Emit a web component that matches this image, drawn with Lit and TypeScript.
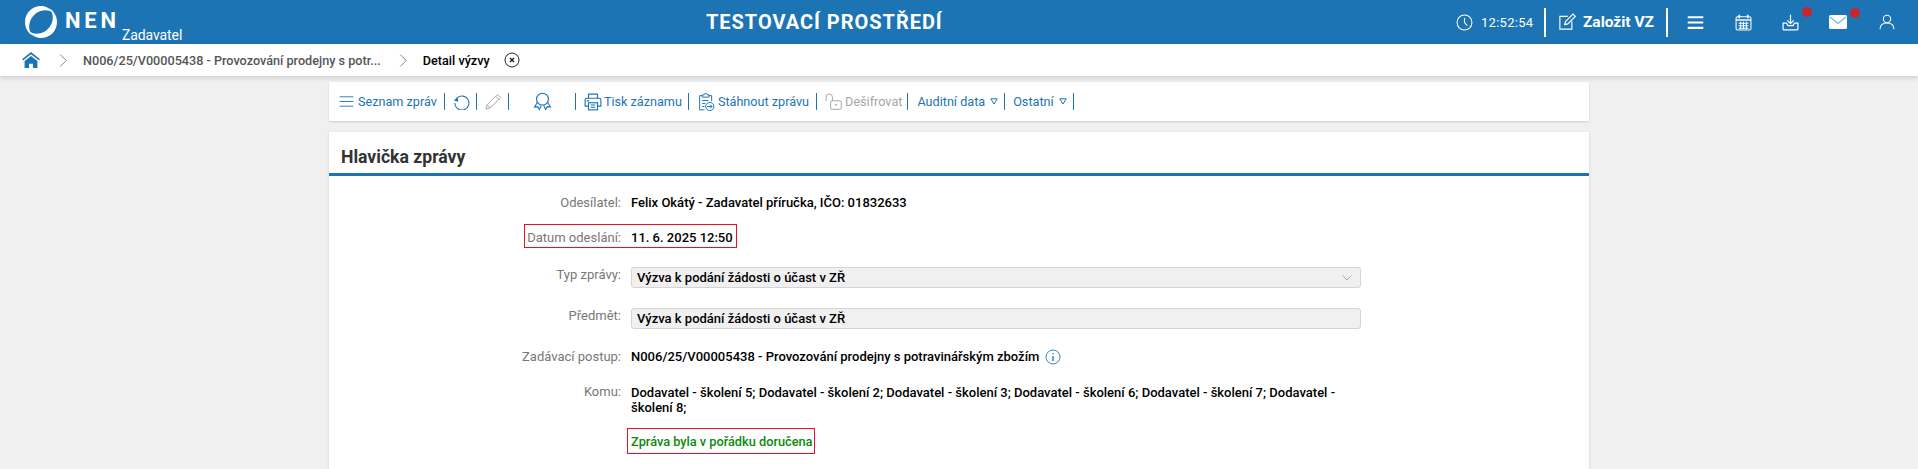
import { LitElement, html, css, svg } from 'lit';
import { customElement } from 'lit/decorators.js';

// Icons are all drawn on a 24 unit box, stroked with currentColor
const icon = (body: unknown, size = 18, sw = 1.5) => html`<svg class="ico" width=${size} height=${size} viewBox="0 0 24 24" fill="none" stroke="currentColor" stroke-width=${sw}>${body}</svg>`;

const icons = {
  clock: svg`<circle cx="12" cy="12" r="10.5"/><path d="M12 5.5V12l4 4.5"/>`,
  edit: svg`<path d="M13 4.5H2.5v17h16V11"/><path d="M9 15.5l1-4L20 1.5l3 3L13 14.5z"/>`,
  menu: svg`<path d="M1 4.5h22M1 12h22M1 19.5h22"/>`,
  calendar: svg`<rect x="1.5" y="4" width="21" height="18.5" rx="2"/><path d="M6 1v5M18 1v5" stroke-width="2.4"/><path d="M1.5 8.5h21" stroke-width="2"/><path d="M5 13h14M5 16.5h14M5 20h14M8 11v10.5M12 11v10.5M16 11v10.5" stroke-width="1.5"/>`,
  download: svg`<path d="M12 1v12M7.5 9l4.5 4.5L16.5 9"/><path d="M6.5 13H1.5v8a1.5 1.5 0 0 0 1.5 1.5h18a1.5 1.5 0 0 0 1.5-1.5v-8h-5l-2 3.5h-7z"/>`,
  user: svg`<circle cx="12" cy="7.5" r="5.5"/><path d="M1.5 23c0-6 4-9.5 10.5-9.5S22.5 17 22.5 23"/>`,
  undo: svg`<path d="M5 7.5A10 10 0 1 1 2.5 14"/><path d="M1 10.5L6.5 6l1 6.5z" fill="currentColor" stroke="none"/>`,
  pencil: svg`<path d="M3 16.5L17.5 2l4.5 4.5L7.5 21 1.5 22.5z"/><path d="M3 16.5L7.5 21M15 4.5l4.5 4.5"/>`,
  ribbon: svg`<circle cx="12" cy="9" r="7.5"/><path d="M5.5 13L2 19l4-.5 2 3.5 2.5-5M18.5 13l3.5 6-4-.5-2 3.5-2.5-5"/>`,
  printer: svg`<path d="M6 7V1.5h12V7"/><path d="M6 17.5H1.5V9a2 2 0 0 1 2-2h17a2 2 0 0 1 2 2v8.5H18"/><rect x="6" y="13" width="12" height="9.5"/><path d="M9 16h6M9 19h6M3.5 10.5h3"/>`,
  clip: svg`<path d="M7 3.5H3.5v19H10"/><path d="M7 5.5V2.5h2.5a2 2 0 0 1 4 0H16v3zM16 3.5h3.5V11"/><path d="M7 10h8M7 14h4M7 18h3"/><circle cx="17" cy="18" r="5.5"/><path d="M13.5 18h6.5M17.5 15.5L20 18l-2.5 2.5"/>`,
  lock: svg`<rect x="8" y="11" width="15" height="12" rx="1.5"/><path d="M1.5 11V6a4.5 4.5 0 0 1 9 0v5"/><circle cx="15.5" cy="16.5" r=".8" fill="currentColor"/>`,
};

const chevron = svg`<path d="M6 1l11 11L6 23"/>`;
const triangle = html`<svg class="t" width="8" height="7" viewBox="0 0 8 7" fill="none" stroke="currentColor"><path d="M.8.8h6.4L4 6z"/></svg>`;

@customElement('app-root')
export class AppRoot extends LitElement {
  static styles = css`
    :host {
      display: block;
      height: 469px;
      overflow: hidden;
      background: #f0f0f0;
      font-family: Roboto, sans-serif;
      font-size: 13px;
      color: #000;
    }
    .ico { display: block; flex: none; }

    /* top bar */
    .top {
      height: 44px;
      background: #1c74b4;
      color: #fff;
      display: flex;
      align-items: center;
      position: relative;
    }
    .brand { width: 706px; height: 44px; flex: none; display: flex; align-items: center; padding-left: 24px; box-sizing: border-box; }
    .brand svg { display: block; flex: none; }
    .nen { font-size: 22px; font-weight: 700; letter-spacing: 3.8px; margin-left: 7px; line-height: 44px; margin-top: -2px; width: 57px; flex: none; }
    .role { font-size: 14px; align-self: flex-end; line-height: 16px; margin: 0 0 1px 0; letter-spacing: -0.1px; }
    .title { font-size: 20px; font-weight: 700; letter-spacing: 0.97px; width: 240px; white-space: nowrap; }
    .tools { margin-left: auto; display: flex; align-items: center; height: 44px; }
    .time { font-size: 13px; margin-left: 8px; width: 51px; letter-spacing: 0.3px; }
    .vline { width: 2px; height: 29px; background: #fff; margin: 0 12px; }
    .create { font-size: 15.5px; font-weight: 700; margin-left: 7px; white-space: nowrap; }
    .badged { position: relative; margin-left: 31px; }
    .dot { position: absolute; width: 10px; height: 10px; border-radius: 50%; background: #c9252c; top: -7px; right: -13px; }

    /* breadcrumb */
    .crumbs {
      height: 32px;
      background: #fff;
      box-shadow: 0 2px 5px rgba(0, 0, 0, 0.15);
      display: flex;
      align-items: center;
      position: relative;
      padding-left: 22px;
      font-weight: 500;
      font-size: 12.65px;
      color: #555;
      white-space: nowrap;
    }
    .crumbs .home { color: #1c74b4; }
    .crumbs .chev { color: #777; margin: 0 13px 0 16px; }
    .crumbs .chev.first { margin-left: 17px; }
    .crumbs b { font-weight: 500; color: #000; }
    .crumbs .x { margin-left: 14px; color: #222; }

    /* content column */
    main { width: 1260px; margin: 6px 0 0 329px; }
    .bar {
      height: 39px;
      background: #fff;
      box-shadow: 0 1px 2px rgba(0, 0, 0, 0.15);
      display: flex;
      align-items: center;
      color: #1c74b4;
      font-size: 12.65px;
      box-sizing: border-box;
      padding-left: 10px;
      white-space: nowrap;
    }
    .bar .item { display: flex; align-items: center; gap: 4px; }
    .bar .sep { width: 1px; height: 17px; background: #1c74b4; margin: 0 8px 0 7px; flex: none; }
    .bar .off { color: #a5a5a5; }
    .bar svg.t { margin-left: 1px; }

    .card { background: #fff; margin-top: 11px; height: 340px; box-shadow: 0 1px 3px rgba(0, 0, 0, 0.12); }
    .card h2 {
      margin: 0;
      box-sizing: border-box;
      padding: 14px 0 0 12px;
      font-size: 17.6px;
      line-height: 22px;
      font-weight: 700;
      color: #333;
      border-bottom: 3px solid #1c74b4;
      height: 44px;
    }
    .form { display: grid; grid-template-columns: 292px 730px; column-gap: 10px; padding-top: 18px; align-items: start; }
    .lbl { text-align: right; color: #777; line-height: 18px; white-space: nowrap; }
    .val { font-weight: 500; line-height: 18px; position: relative; }
    .gap-a { margin-bottom: 17px; }
    .field {
      height: 21px;
      box-sizing: border-box;
      background: #f0f0f0;
      border: 1px solid #d4d4d4;
      border-radius: 3px;
      padding: 0 5px;
      line-height: 19px;
      display: flex;
      justify-content: space-between;
      align-items: center;
      color: #000;
    }
    .field .arrow { color: #999; margin-right: 2px; }
    .info { display: inline-block; vertical-align: -4px; margin-left: 2px; color: #1c74b4; }
    .komu { line-height: 15px; margin-top: 2px; }
    .ok { color: #0a8a0a; font-size: 12.75px; }
    .mark { position: absolute; border: 1px solid #e8111f; pointer-events: none; }
    .mark.m1 { left: -107px; top: -5px; width: 211px; height: 22px; }
    .mark.m2 { left: -4px; top: -5px; width: 186px; height: 24px; }
  `;

  render() {
    return html`
      <div class="top">
        <div class="brand">
          <svg width="34" height="34" viewBox="0 0 34 34" fill="#fff">
            <path d="M17 1C8 1 1 8 1 17c0 6 3 11 8 14-3-3-4.5-8-3.5-12.5C7 12 12 6.5 19 5.5c4-.6 8 .5 10 2.5C26 3.5 22 1 17 1z"/>
            <path d="M17 33c9 0 16-7 16-16 0-6-3-11-8-14 3 3 4.5 8 3.5 12.5C27 22 22 27.5 15 28.5c-4 .6-8-.5-10-2.5 3 4.5 7 7 12 7z"/>
          </svg>
          <span class="nen">NEN</span>
          <span class="role">Zadavatel</span>
        </div>
        <div class="title">TESTOVACÍ PROSTŘEDÍ</div>
        <div class="tools">
          ${icon(icons.clock, 17, 1.5)}
          <span class="time">12:52:54</span>
          <span class="vline"></span>
          ${icon(icons.edit, 18, 1.5)}
          <span class="create">Založit VZ</span>
          <span class="vline"></span>
          <span style="margin-left:7px">${icon(icons.menu, 17, 3)}</span>
          <span class="badged">${icon(icons.calendar, 17, 1.5)}</span>
          <span class="badged" style="margin-left:30px">${icon(icons.download, 17, 1.7)}<i class="dot"></i></span>
          <span class="badged" style="margin-left:30px">
            <svg class="ico" width="18" height="14" viewBox="0 0 18 14"><rect width="18" height="14" rx="1.5" fill="#fff"/><path d="M1 2l8 6.5L17 2" fill="none" stroke="#7fb3d8" stroke-width="1.2"/></svg>
            <i class="dot"></i>
          </span>
          <span style="margin:0 23px 0 32px">${icon(icons.user, 16, 1.6)}</span>
        </div>
      </div>

      <div class="crumbs">
        <span class="home">
          <svg class="ico" width="18" height="16" viewBox="0 0 14 15" preserveAspectRatio="none" fill="currentColor"><path d="M7 0L0 6.8l1 1L7 2l6 5.8 1-1z"/><path d="M2 8.5L7 3.8l5 4.7V15H8.5v-4h-3v4H2z"/></svg>
        </span>
        <span class="chev first">${icon(chevron, 13, 1.7)}</span>
        <span>N006/25/V00005438 - Provozování prodejny s potr...</span>
        <span class="chev">${icon(chevron, 13, 1.7)}</span>
        <b>Detail výzvy</b>
        <span class="x">${icon(svg`<circle cx="12" cy="12" r="10.5"/><path d="M9 9l6 6M15 9l-6 6" stroke-width="2.2"/>`, 16, 1.5)}</span>
      </div>

      <main>
        <div class="bar">
          <span class="item">${icon(icons.menu, 15, 1.4)}Seznam zpráv</span><i class="sep"></i>
          <span class="item">${icon(icons.undo, 17, 1.5)}</span><i class="sep" style="margin-left:6px"></i>
          <span class="item off">${icon(icons.pencil, 17, 1.4)}</span><i class="sep" style="margin-left:6px"></i>
          <span class="item" style="margin:0 23px 0 16px">${icon(icons.ribbon, 19, 1.4)}</span><i class="sep" style="margin-left:0"></i>
          <span class="item" style="gap:2px">${icon(icons.printer, 18, 1.5)}Tisk záznamu</span><i class="sep" style="margin-left:6px"></i>
          <span class="item" style="gap:3px">${icon(icons.clip, 18, 1.3)}Stáhnout zprávu</span><i class="sep"></i>
          <span class="item off" style="gap:3px">${icon(icons.lock, 17, 1.4)}Dešifrovat</span><i class="sep" style="margin:0 9px 0 5px"></i>
          <span class="item">Auditní data${triangle}</span><i class="sep" style="margin-left:6px"></i>
          <span class="item">Ostatní${triangle}</span><i class="sep" style="margin-left:6px"></i>
        </div>

        <section class="card">
          <h2>Hlavička zprávy</h2>
          <div class="form">
            <div class="lbl gap-a">Odesílatel:</div>
            <div class="val gap-a">Felix Okátý - Zadavatel příručka, IČO: 01832633</div>

            <div class="lbl">Datum odeslání:</div>
            <div class="val" style="margin-bottom:20px">11. 6. 2025 12:50<span class="mark m1"></span></div>

            <div class="lbl" style="margin-top:-1px">Typ zprávy:</div>
            <div style="margin-bottom:20px"><div class="val field">Výzva k podání žádosti o účast v ZŘ
              <span class="arrow">${icon(svg`<path d="M3 7l9 9 9-9"/>`, 12, 1.6)}</span></div></div>

            <div class="lbl" style="margin-top:-1px">Předmět:</div>
            <div style="margin-bottom:19px"><div class="val field">Výzva k podání žádosti o účast v ZŘ</div></div>

            <div class="lbl">Zadávací postup:</div>
            <div class="val gap-a">N006/25/V00005438 - Provozování prodejny s potravinářským zbožím
              <span class="info">${icon(svg`<circle cx="12" cy="12" r="10.5"/><path d="M12 10.5V18M12 6v2" stroke-width="2"/>`, 16, 1.3)}</span></div>

            <div class="lbl">Komu:</div>
            <div class="val komu">Dodavatel - školení 5; Dodavatel - školení 2; Dodavatel - školení 3; Dodavatel - školení 6; Dodavatel - školení 7; Dodavatel - školení 8;</div>

            <div></div>
            <div class="val ok" style="margin-top:18px">Zpráva byla v pořádku doručena<span class="mark m2"></span></div>
          </div>
        </section>
      </main>
    `;
  }
}
